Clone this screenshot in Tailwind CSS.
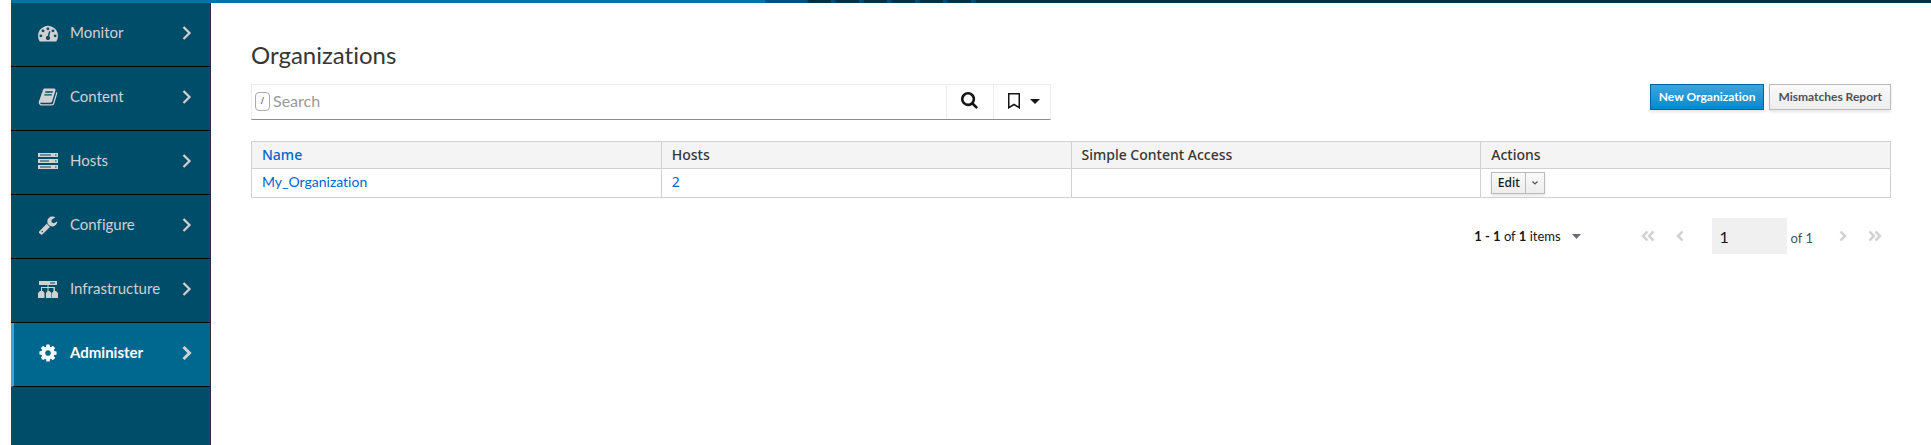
<!DOCTYPE html>
<html lang="en">
<head>
<meta charset="utf-8">
<title>Organizations</title>
<script src="https://cdn.jsdelivr.net/npm/@tailwindcss/browser@4"></script>
</head>
<body class="flex min-h-screen flex-col bg-white pl-[11px] font-['Noto_Sans',sans-serif] text-sm text-[#151515] [font-variant-ligatures:none]">
<header class="h-[3px] bg-[linear-gradient(90deg,#0075a4_0_754px,#00507f_755px_796px,#002f4a_798px)]">
  <div class="ml-[820px] h-full w-[145px] bg-[repeating-linear-gradient(90deg,#004a75_0_4px,#002f4a_5px_28px)]"></div>
</header>
<div class="flex grow">
  <nav class="w-[200px] shrink-0 border-r border-[#292e34] bg-[#004d69] font-[Lato,sans-serif] text-[15px] text-[#d1d1d1]" aria-label="Main">
    <ul>
      <li><a href="#" class="flex h-16 items-center border-b border-[#030303] pr-[18px] pb-1 pl-[27px]">
        <svg class="size-[20px]" viewBox="0 0 1792 1792" fill="currentColor"><path d="M384 1152q0-53-37.5-90.5t-90.5-37.5-90.5 37.5-37.5 90.5 37.5 90.5 90.5 37.5 90.5-37.5 37.5-90.5zm192-448q0-53-37.5-90.5t-90.5-37.5-90.5 37.5-37.5 90.5 37.5 90.5 90.5 37.5 90.5-37.5 37.5-90.5zm428 481l101-382q6-26-7.5-48.5t-38.5-29.5-48 6.5-30 39.5l-101 382q-60 5-107 43.5t-63 98.5q-20 77 20 146t117 89 146-20 89-117q16-60-6-117t-72-91zm660-33q0-53-37.5-90.5t-90.5-37.5-90.5 37.5-37.5 90.5 37.5 90.5 90.5 37.5 90.5-37.5 37.5-90.5zm-640-640q0-53-37.5-90.5t-90.5-37.5-90.5 37.5-37.5 90.5 37.5 90.5 90.5 37.5 90.5-37.5 37.5-90.5zm448 192q0-53-37.5-90.5t-90.5-37.5-90.5 37.5-37.5 90.5 37.5 90.5 90.5 37.5 90.5-37.5 37.5-90.5zm320 448q0 261-141 483-19 29-54 29h-1402q-35 0-54-29-141-221-141-483 0-182 71-348t191-286 286-191 348-71 348 71 286 191 191 286 71 348z"/></svg>
        <span class="ml-3 grow">Monitor</span>
        <svg class="h-4 w-[10px]" viewBox="0 0 10 16" fill="none" stroke="currentColor" stroke-width="2.2"><path d="M1.500 2l6 6-6 6"/></svg></a></li>
      <li><a href="#" class="flex h-16 items-center border-b border-[#030303] pr-[18px] pb-1 pl-[27px]">
        <svg class="size-[20px]" viewBox="0 0 1792 1792" fill="currentColor"><path d="M1703 478q40 57 18 129l-275 906q-19 64-76.500 107.500t-122.500 43.500h-923q-77 0-148.500-53.500t-99.500-131.500q-24-67-2-127 0-4 3-27t4-37q1-8-3-21.500t-3-19.500q2-11 8-21t16.500-23.500 16.500-23.500q23-38 45-91.500t30-91.500q3-10 .5-30t-.5-28q3-11 17-28t17-23q21-36 42-92t25-90q1-9-2.500-32t.5-28q4-13 22-30.500t22-22.500q19-26 42.500-84.500t27.500-96.500q1-8-3-25.500t-2-26.500q2-8 9-18t18-23 17-21q8-12 16.500-30.500t15-35 16-36 19.500-32 26.500-23.500 36-11.500 47.500 5.500l-1 3q38-9 51-9h761q74 0 114 56t18 130l-274 906q-36 119-71.500 153.500t-128.500 34.500h-869q-27 0-38 15-11 16-1 43 24 70 144 70h923q29 0 56-15.500t35-41.500l300-987q7-22 5-57 38 15 59 43zm-1064 2q-4 13 2 22.500t20 9.500h608q13 0 25.500-9.500t16.500-22.500l21-64q4-13-2-22.500t-20-9.500h-608q-13 0-25.500 9.500t-16.500 22.500zm-83 256q-4 13 2 22.500t20 9.500h608q13 0 25.500-9.500t16.500-22.500l21-64q4-13-2-22.500t-20-9.500h-608q-13 0-25.500 9.500t-16.500 22.500z"/></svg>
        <span class="ml-3 grow">Content</span>
        <svg class="h-4 w-[10px]" viewBox="0 0 10 16" fill="none" stroke="currentColor" stroke-width="2.2"><path d="M1.500 2l6 6-6 6"/></svg></a></li>
      <li><a href="#" class="flex h-16 items-center border-b border-[#030303] pr-[18px] pb-1 pl-[27px]">
        <svg class="size-[20px]" viewBox="0 0 20 20" fill="currentColor" fill-rule="evenodd"><path d="M0 2h20v4H0zm2 1.500v1h11v-1zm15 0v1h1.500v-1zM0 8h20v4H0zm2 1.500v1h9v-1zm15 0v1h1.500v-1zM0 14h20v4H0zm2 1.500v1h11v-1zm15 0v1h1.500v-1z"/></svg>
        <span class="ml-3 grow">Hosts</span>
        <svg class="h-4 w-[10px]" viewBox="0 0 10 16" fill="none" stroke="currentColor" stroke-width="2.2"><path d="M1.500 2l6 6-6 6"/></svg></a></li>
      <li><a href="#" class="flex h-16 items-center border-b border-[#030303] pr-[18px] pb-1 pl-[27px]">
        <svg class="size-[20px]" viewBox="0 0 1792 1792" fill="currentColor"><path d="M448 1472q0-26-19-45t-45-19-45 19-19 45 19 45 45 19 45-19 19-45zm644-420l-682 682q-37 37-90 37-52 0-91-37l-106-108q-38-36-38-90 0-53 38-91l681-681q39 98 114.500 173.500t173.500 114.500zm634-435q0 39-23 106-47 134-164.500 217.500t-258.500 83.500q-185 0-316.500-131.500t-131.500-316.500 131.500-316.500 316.500-131.500q58 0 121.500 16.500t107.500 46.500q16 11 16 28t-16 28l-293 169v224l193 107q5-3 79-48.500t135.500-81 70.500-35.500q15 0 23.500 10t8.500 25z"/></svg>
        <span class="ml-3 grow">Configure</span>
        <svg class="h-4 w-[10px]" viewBox="0 0 10 16" fill="none" stroke="currentColor" stroke-width="2.2"><path d="M1.500 2l6 6-6 6"/></svg></a></li>
      <li><a href="#" class="flex h-16 items-center border-b border-[#030303] pr-[18px] pb-1 pl-[27px]">
        <svg class="size-[20px]" viewBox="0 0 20 20" fill="currentColor" fill-rule="evenodd"><path d="M1 2h18v4H1zm11 1.500v1h5v-1zM9.500 6h1v2h6.500v4h1l2 2v5h-6v-5l1.500-2V9h-5v3h1l2 2v5h-5.500v-5l1.500-2V9H4v3h1l1.500 2v5H0v-5l2-2h1V8h6.500z"/></svg>
        <span class="ml-3 grow">Infrastructure</span>
        <svg class="h-4 w-[10px]" viewBox="0 0 10 16" fill="none" stroke="currentColor" stroke-width="2.2"><path d="M1.500 2l6 6-6 6"/></svg></a></li>
      <li><a href="#" aria-current="page" class="flex h-16 items-center border-b border-l-3 border-b-[#030303] border-l-[#39a5dc] bg-[#00688f] pr-[18px] pb-1 pl-6 font-bold text-white">
        <svg class="size-[20px]" viewBox="0 0 1792 1792" fill="currentColor"><path d="M1152 896q0-106-75-181t-181-75-181 75-75 181 75 181 181 75 181-75 75-181zm512-109v222q0 12-8 23t-20 13l-185 28q-19 54-39 91 35 50 107 138 10 12 10 25t-9 23q-27 37-99 108t-94 71q-12 0-26-9l-138-108q-44 23-91 38-16 136-29 186-7 28-36 28h-222q-14 0-24.500-8.500t-11.500-21.500l-28-184q-49-16-90-37l-141 107q-10 9-25 9-14 0-25-11-126-114-165-168-7-10-7-23 0-12 8-23 15-21 51-66.500t54-70.500q-27-50-41-99l-183-27q-13-2-21-12.500t-8-23.500v-222q0-12 8-23t19-13l186-28q14-46 39-92-40-57-107-138-10-12-10-24 0-10 9-23 26-36 98.500-107.500t94.500-71.500q13 0 26 10l138 107q44-23 91-38 16-136 29-186 7-28 36-28h222q14 0 24.500 8.500t11.500 21.500l28 184q49 16 90 37l142-107q9-9 24-9 13 0 25 10 129 119 165 170 7 8 7 22 0 12-8 23-15 21-51 66.500t-54 70.500q26 50 41 98l183 28q13 2 21 12.500t8 23.500z"/></svg>
        <span class="ml-3 grow">Administer</span>
        <svg class="h-4 w-[10px] text-[#d1d1d1]" viewBox="0 0 10 16" fill="none" stroke="currentColor" stroke-width="3"><path d="M1.500 2l6 6-6 6"/></svg></a></li>
    </ul>
  </nav>

  <main class="min-w-0 grow px-10 pt-9">
    <h1 class="font-[Lato,sans-serif] text-[24px] leading-8 text-[#363636]">Organizations</h1>
    <div class="mt-[13px] flex items-start justify-between">
      <form class="flex h-9 w-[800px] border border-[#ededed] border-b-[#8a8d90]" role="search">
        <label for="search" class="flex grow items-center pb-[2px] pl-[3px]">
          <kbd class="flex h-[19px] w-[15px] items-center justify-center rounded-[4px] border border-[#aaa] font-['Noto_Sans',sans-serif] text-[9px] text-[#555]">/</kbd>
          <input id="search" type="text" placeholder="Search" class="ml-[3px] h-6 min-w-0 grow font-[Lato,sans-serif] text-base outline-none placeholder:text-[#999]">
        </label>
        <button type="button" aria-label="Search" class="flex w-[47px] items-center justify-center border-l border-[#ededed] pb-[2px]">
          <svg class="size-[18px]" viewBox="0 0 1792 1792" fill="currentColor"><path d="M1152 704q0-185-131.500-316.500t-316.500-131.500-316.500 131.500-131.500 316.500 131.500 316.500 316.500 131.500 316.500-131.500 131.500-316.500zm512 832q0 52-38 90t-90 38q-54 0-90-38l-343-342q-179 124-399 124-143 0-273.500-55.500t-225-150-150-225-55.500-273.500 55.500-273.500 150-225 225-150 273.500-55.500 273.500 55.500 225 150 150 225 55.500 273.500q0 220-124 399l343 343q37 37 37 90z"/></svg>
        </button>
        <button type="button" aria-label="Bookmarks" class="flex w-[57px] items-center gap-[10px] border-l border-[#ededed] pb-[2px] pl-[14px]">
          <svg class="h-4 w-3" viewBox="0 0 12 16" fill="none" stroke="currentColor" stroke-width="1.500"><path d="M.75.75h10.500v14L6 11.500.75 14.750z"/></svg>
          <svg class="h-[5px] w-[10px]" viewBox="0 0 10 5" fill="currentColor"><path d="M0 0h10L5 5z"/></svg>
        </button>
      </form>
      <div class="flex gap-[5px] font-[Lato,sans-serif] text-xs leading-4 font-bold">
        <a href="#" class="border border-[#00659c] bg-linear-to-b from-[#39a5dc] to-[#0088ce] px-2 py-1 text-white shadow-[0_2px_3px_rgba(3,3,3,0.1)]">New Organization</a>
        <a href="#" class="border border-[#bbb] bg-linear-to-b from-[#fafafa] to-[#ededed] px-2 py-1 text-[#4d5258] shadow-[0_2px_3px_rgba(3,3,3,0.1)]">Mismatches Report</a>
      </div>
    </div>

    <table class="mt-[21px] w-full table-fixed border-collapse text-left">
      <thead class="bg-[#f4f4f4] text-[#363636]">
        <tr class="h-[27px]">
          <th class="border border-[#d1d1d1] px-[10px] font-medium"><a href="#" class="text-[#0066cc]">Name</a></th>
          <th class="border border-[#d1d1d1] px-[10px] font-medium">Hosts</th>
          <th class="border border-[#d1d1d1] px-[10px] font-medium">Simple Content Access</th>
          <th class="border border-[#d1d1d1] px-[10px] font-medium">Actions</th>
        </tr>
      </thead>
      <tbody>
        <tr class="h-[29px]">
          <td class="border border-[#d1d1d1] px-[10px] pb-[2px] font-[Lato,sans-serif]"><a href="#" class="text-[#0066cc]">My_Organization</a></td>
          <td class="border border-[#d1d1d1] px-[10px] pb-[2px]"><a href="#" class="text-[#0066cc]">2</a></td>
          <td class="border border-[#d1d1d1] px-[10px]"></td>
          <td class="border border-[#d1d1d1] px-[10px]">
            <div class="flex h-[22px] w-[54px] border border-[#bbb] bg-linear-to-b from-[#fafafa] to-[#ededed] text-xs font-medium shadow-[0_2px_3px_rgba(3,3,3,0.1)]">
              <a href="#" class="w-[33px] text-center leading-5">Edit</a>
              <button type="button" aria-label="More actions" class="flex grow items-center justify-center border-l border-[#bbb]">
                <svg class="h-1 w-[6px]" viewBox="0 0 6 4" fill="none" stroke="#4d5258" stroke-width="1.200"><path d="M.5.5L3 3 5.500.5"/></svg>
              </button>
            </div>
          </td>
        </tr>
      </tbody>
    </table>

    <div class="mt-5 flex h-9 items-center justify-end font-[Lato,sans-serif] text-[13px] text-[#151515]">
      <button type="button" class="flex items-center gap-[11px]"><span><b class="font-bold">1 - 1</b> of <b class="font-bold">1</b> items</span>
        <svg class="h-[5px] w-[9px]" viewBox="0 0 9 5" fill="#6a6e73"><path d="M0 0h9L4.500 5z"/></svg></button>
      <button type="button" disabled aria-label="First page" class="ml-[60px] text-[#d2d2d2]"><svg class="h-3 w-[14px]" viewBox="0 0 14 12" fill="none" stroke="currentColor" stroke-width="2.500"><path d="M6.500 1.500L2 6l4.500 4.500M12.500 1.500L8 6l4.500 4.500"/></svg></button>
      <button type="button" disabled aria-label="Previous page" class="ml-[21px] text-[#d2d2d2]"><svg class="h-3 w-2" viewBox="0 0 8 12" fill="none" stroke="currentColor" stroke-width="2.500"><path d="M6.500 1.500L2 6l4.500 4.500"/></svg></button>
      <input type="text" value="1" aria-label="Current page" class="ml-7 h-9 w-[75px] bg-[#f0f0f0] pl-2 text-base">
      <span class="mt-1 ml-1 text-[#4d5258]">of 1</span>
      <button type="button" disabled aria-label="Next page" class="ml-[26px] text-[#d2d2d2]"><svg class="h-3 w-2" viewBox="0 0 8 12" fill="none" stroke="currentColor" stroke-width="2.500"><path d="M1.500 1.500L6 6l-4.500 4.500"/></svg></button>
      <button type="button" disabled aria-label="Last page" class="mr-[9px] ml-[21px] text-[#d2d2d2]"><svg class="h-3 w-[14px]" viewBox="0 0 14 12" fill="none" stroke="currentColor" stroke-width="2.500"><path d="M1.500 1.500L6 6l-4.500 4.500M7.500 1.500L12 6l-4.500 4.500"/></svg></button>
    </div>
  </main>
</div>
</body>
</html>
